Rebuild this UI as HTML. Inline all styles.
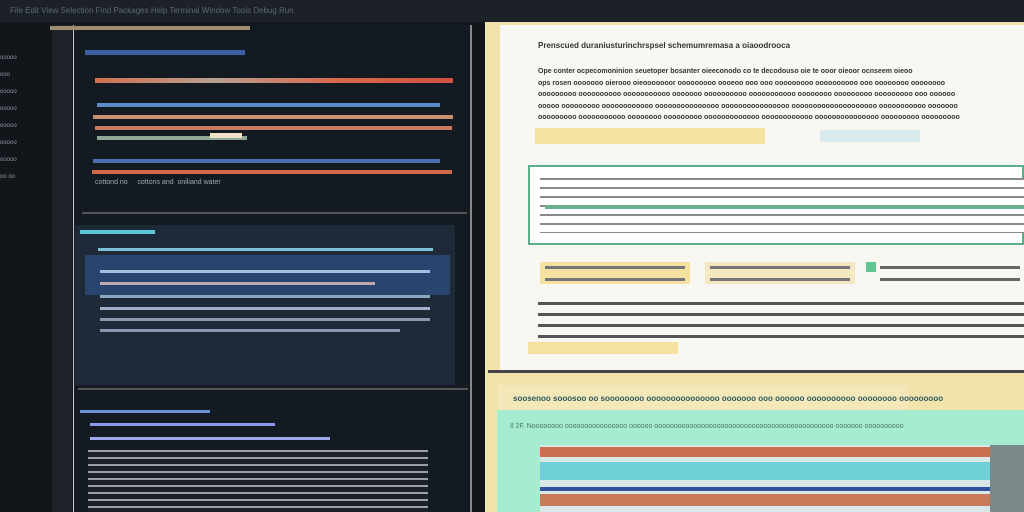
<!DOCTYPE html><html><head><style>
body{margin:0;width:1024px;height:512px;overflow:hidden;background:#12161b;position:relative;font-family:"Liberation Sans",sans-serif}
div{position:absolute}
.t{font-size:8px;white-space:nowrap;overflow:hidden;line-height:10px}
</style></head><body>
<div style="left:0;top:0;width:1024px;height:22px;background:#1c2127"></div>
<div class="t" style="left:10px;top:6px;width:460px;color:#5b6670">File Edit View Selection Find Packages Help Terminal Window Tools Debug Run</div>
<div style="left:52px;top:25px;width:20px;height:487px;background:#1d2229"></div>
<div style="left:73px;top:25px;width:1px;height:487px;background:#c8c8c8"></div>
<div style="left:74px;top:25px;width:396px;height:487px;background:#141a22"></div>
<div style="left:470px;top:25px;width:2px;height:487px;background:#888"></div>
<div class="t" style="left:0;top:50px;width:48px;color:#8a94a0;line-height:17px;font-size:6px">ooooo<br>ooo<br>ooooo<br>ooooo<br>ooooo<br>ooooo<br>ooooo<br>oo oo</div>
<div style="left:50px;top:26px;width:200px;height:4px;background:#a08c70"></div>
<div style="left:85px;top:50px;width:160px;height:5px;background:#3a5ea0"></div>
<div style="left:95px;top:78px;width:358px;height:5px;background:linear-gradient(90deg,#d07050,#b8a090,#d86a50,#d05040)"></div>
<div style="left:97px;top:103px;width:343px;height:4px;background:#5a8ac8"></div>
<div style="left:93px;top:115px;width:360px;height:4px;background:#c89070"></div>
<div style="left:95px;top:126px;width:357px;height:4px;background:#c87a60"></div>
<div style="left:97px;top:136px;width:150px;height:4px;background:#90a898"></div>
<div style="left:210px;top:133px;width:32px;height:5px;background:#f0e0c8"></div>
<div style="left:93px;top:159px;width:347px;height:4px;background:#4a70b0"></div>
<div style="left:92px;top:170px;width:360px;height:4px;background:#d06a48"></div>
<div class="t" style="left:95px;top:178px;color:#a0a8b0;font-size:7px">cottond no &nbsp; &nbsp; cottons and &nbsp;oniliand water</div>
<div style="left:82px;top:212px;width:385px;height:2px;background:#555"></div>
<div style="left:75px;top:225px;width:380px;height:160px;background:#1e2a38"></div>
<div style="left:80px;top:230px;width:75px;height:4px;background:#5ac8d8"></div>
<div style="left:98px;top:248px;width:335px;height:3px;background:#7ac0d8"></div>
<div style="left:85px;top:255px;width:365px;height:40px;background:#2a4470"></div>
<div style="left:100px;top:270px;width:330px;height:3px;background:#a0c0e0"></div>
<div style="left:100px;top:282px;width:275px;height:3px;background:#c0a8b0"></div>
<div style="left:100px;top:295px;width:330px;height:3px;background:#8aa8c0"></div>
<div style="left:100px;top:307px;width:330px;height:3px;background:#a0b0c8"></div>
<div style="left:100px;top:318px;width:330px;height:3px;background:#8898b0"></div>
<div style="left:100px;top:329px;width:300px;height:3px;background:#8898b0"></div>
<div style="left:78px;top:388px;width:390px;height:2px;background:#555"></div>
<div style="left:80px;top:410px;width:130px;height:3px;background:#6a90d8"></div>
<div style="left:90px;top:423px;width:185px;height:3px;background:#8a9ae8"></div>
<div style="left:90px;top:437px;width:240px;height:3px;background:#a0a8f0"></div>
<div style="left:88px;top:450px;width:340px;height:62px;background:repeating-linear-gradient(#9aa0a8 0 2px,#1c2028 2px 7px)"></div>
<div style="left:485px;top:22px;width:539px;height:490px;background:#f2e3ad"></div>
<div style="left:500px;top:25px;width:524px;height:345px;background:#f8f7f2"></div>
<div style="left:488px;top:370px;width:536px;height:3px;background:#444"></div>
<div class="t" style="left:538px;top:41px;color:#333;font-weight:bold;font-size:8px">Prenscued duraniusturinchrspsel schemumremasa a oiaoodrooca</div>
<div class="t" style="left:538px;top:66px;width:486px;color:#333;font-weight:bold;font-size:7px;line-height:11.5px">Ope conter ocpecomoninion seuetoper bosanter oieeconodo co te decodouso oie te ooor oieoor ocnseem oieoo<br>ops rosen ooooooo oierooo oieooooooor ooooooooo oooeoo ooo ooo ooooooooo oooooooooo ooo oooooooo oooooooo<br>ooooooooo oooooooooo ooooooooooo ooooooo oooooooooo ooooooooooo oooooooo ooooooooo ooooooooo ooo oooooo<br>ooooo ooooooooo oooooooooooo ooooooooooooooo oooooooooooooooo oooooooooooooooooooo ooooooooooo ooooooo<br>ooooooooo ooooooooooo oooooooo ooooooooo ooooooooooooo oooooooooooo ooooooooooooooo ooooooooo ooooooooo</div>
<div style="left:535px;top:128px;width:230px;height:16px;background:#f5e2a0"></div>
<div style="left:820px;top:130px;width:100px;height:12px;background:#d8ecf0"></div>
<div style="left:528px;top:165px;width:496px;height:80px;background:#fff;border:2px solid #5cae88;box-sizing:border-box"></div>
<div style="left:540px;top:178px;width:484px;height:55px;background:repeating-linear-gradient(#8a8a8a 0 2px,#fff 2px 9px)"></div>
<div style="left:545px;top:205px;width:479px;height:4px;background:#6ab08a"></div>
<div style="left:540px;top:262px;width:150px;height:22px;background:#f5e2a0"></div>
<div style="left:705px;top:262px;width:150px;height:22px;background:#f5e8c0"></div>
<div style="left:866px;top:262px;width:10px;height:10px;background:#5cc890"></div>
<div style="left:880px;top:266px;width:140px;height:3px;background:#666"></div>
<div style="left:880px;top:278px;width:140px;height:3px;background:#666"></div>
<div style="left:545px;top:266px;width:140px;height:3px;background:#777"></div>
<div style="left:545px;top:278px;width:140px;height:3px;background:#777"></div>
<div style="left:710px;top:266px;width:140px;height:3px;background:#777"></div>
<div style="left:710px;top:278px;width:140px;height:3px;background:#777"></div>
<div style="left:538px;top:302px;width:486px;height:40px;background:repeating-linear-gradient(#555 0 3px,#f8f7f2 3px 11px)"></div>
<div style="left:528px;top:342px;width:150px;height:12px;background:#f5e2a0"></div>
<div style="left:498px;top:385px;width:410px;height:26px;background:#f5e8b8"></div>
<div class="t" style="left:513px;top:394px;color:#2a5a60;font-weight:bold;font-size:8px">soosenoo sooosoo oo soooooooo ooooooooooooooo ooooooo ooo oooooo oooooooooo oooooooo ooooooooo</div>
<div style="left:497px;top:410px;width:527px;height:102px;background:#a6ecd0"></div>
<div class="t" style="left:510px;top:422px;color:#4a7a68;font-size:7px">Il 2F. Noooooooo oooooooooooooooo oooooo oooooooooooooooooooooooooooooooooooooooooooooo ooooooo oooooooooo</div>
<div style="left:540px;top:445px;width:450px;height:67px;background:#d8e8e8"></div>
<div style="left:540px;top:447px;width:450px;height:10px;background:#c87050"></div>
<div style="left:540px;top:462px;width:450px;height:18px;background:#70d0d8"></div>
<div style="left:540px;top:487px;width:450px;height:4px;background:#3050a0"></div>
<div style="left:540px;top:494px;width:450px;height:12px;background:#c87a58"></div>
<div style="left:990px;top:445px;width:34px;height:67px;background:#7a8a88"></div>
</body></html>
